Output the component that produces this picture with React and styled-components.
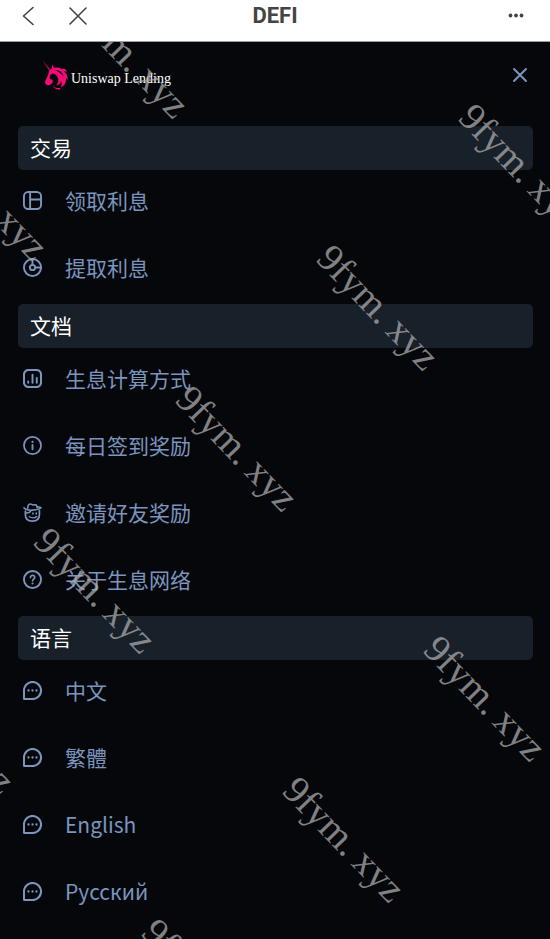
import React from 'react';
import styled, { createGlobalStyle } from 'styled-components';

const GlobalStyle = createGlobalStyle`
    * {
        box-sizing: border-box;
    }

    body {
        margin: 0;
        background: #05070b;
        font-family: "Noto Sans CJK SC", "Noto Sans", sans-serif;
    }
`;

const Page = styled.div`
    display: flex;
    flex-direction: column;
    min-height: 100vh;
    background: #05070b;
`;

const TitleBar = styled.header`
    display: grid;
    grid-template-columns: 1fr auto 1fr;
    align-items: center;
    height: 42px;
    padding: 0 24px 9px;
    background: #ffffff;
    border-bottom: 1px solid #a0a0a0;
`;

const TitleGroup = styled.div`
    display: flex;
    align-items: center;
    justify-content: ${props => props.$end ? 'flex-end' : 'flex-start'};
    gap: 24px;
`;

const Title = styled.h1`
    margin: 0;
    font-family: Roboto, sans-serif;
    font-size: 22px;
    font-weight: 700;
    line-height: 32px;
    color: #444444;
`;

const IconButton = styled.button`
    display: flex;
    padding: 0;
    border: 0;
    background: none;
    color: ${props => props.$color || '#444444'};
    cursor: pointer;
`;

const Menu = styled.main`
    position: relative;
    flex: 1;
    padding: 0 17px 0 18px;
    overflow: hidden;
`;

const Brand = styled.div`
    display: flex;
    align-items: flex-start;
    justify-content: space-between;
    height: 84px;
    padding: 18px 4px 0 24px;
`;

const Logo = styled.a`
    display: flex;
    align-items: flex-end;
    gap: 2px;
    color: #ffffff;
    font-family: "Liberation Serif", serif;
    font-size: 14px;
    line-height: 22px;
    text-decoration: none;
`;

const CloseWrap = styled.div`
    padding-top: 6px;
`;

const SectionTitle = styled.h2`
    margin: 0;
    padding: 0 12px 2px;
    border-radius: 5px;
    background: #18202a;
    color: #ffffff;
    font-size: 21px;
    font-weight: 400;
    line-height: 42px;
`;

const List = styled.ul`
    margin: 0;
    padding: 0;
    list-style: none;
`;

const Item = styled.li`
    height: 67px;
`;

const ItemLink = styled.a`
    display: flex;
    align-items: center;
    gap: 23px;
    height: 60px;
    padding-left: 5px;
    color: #7b95bf;
    font-size: 21px;
    line-height: 30px;
    text-decoration: none;
`;

const Icon = styled.svg`
    flex: none;
    width: ${props => props.$size || 19}px;
    height: ${props => props.$size || 19}px;
    fill: none;
    stroke: currentColor;
    stroke-width: 2;
    stroke-linecap: round;
    stroke-linejoin: round;
`;

const Mark = styled.span`
    position: absolute;
    left: ${props => props.$x}px;
    top: ${props => props.$y}px;
    transform: rotate(46deg);
    transform-origin: 0 50%;
    color: rgba(170, 170, 170, 0.75);
    font-family: "Liberation Serif", serif;
    font-size: 39px;
    line-height: 48px;
    white-space: nowrap;
    pointer-events: none;

    span {
        margin-left: 8px;
    }
`;

const icons = {
    layout: (
        <>
            <rect x="1" y="1" width="18" height="18" rx="4.5" />
            <path d="M7.5 1v18M7.5 9H19" />
        </>
    ),
    donut: (
        <>
            <circle cx="10" cy="10" r="9" />
            <circle cx="10" cy="10" r="2.8" />
            <path d="M10 1v6M13 10h6" />
        </>
    ),
    chart: (
        <>
            <rect x="1" y="1" width="18" height="18" rx="5" strokeWidth="2.2" />
            <path d="M5.5 13v1.5M10 6v8.5M14.5 9.5v5" />
        </>
    ),
    info: (
        <>
            <circle cx="10" cy="10" r="9" strokeWidth="1.8" />
            <path d="M10 9.5V14" />
            <circle cx="10" cy="6.2" r="1.2" fill="currentColor" stroke="none" />
        </>
    ),
    friend: (
        <>
            <path d="M1 5c1.800 2.200 5 2.800 9 2.500 4-.2 7.200-1 9-2.500-1.500-.7-2.800-1-4.200-1" strokeWidth="1.6" />
            <path d="M5 5.500C5 3 5.500 1 7.500 1c1.500 0 2 1 3.500 1 1.300 0 3-.6 3.500.8L15 5" strokeWidth="1.6" />
            <path d="M2.500 8.500V12c0 4.500 3 7 7.300 7 4.400 0 7.500-2.500 7.500-7V8" strokeWidth="1.8" />
            <path d="M3 10.500c2.500.2 4.500-.6 5.500-2.500" strokeWidth="1.4" />
            <path d="M10.500 10.500v1M14 10.500v1" strokeWidth="1.6" />
            <path d="M6.500 14.500c2.500 1.300 6 1.200 8-.2" strokeWidth="1.4" />
        </>
    ),
    help: (
        <>
            <circle cx="10" cy="10" r="9" />
            <path d="M7.800 8c0-1.500 1-2.300 2.200-2.300s2.300.8 2.300 2.100c0 1.700-2.300 1.800-2.300 3.700" strokeWidth="1.7" />
            <circle cx="10" cy="14.2" r="1.1" fill="currentColor" stroke="none" />
        </>
    ),
    chat: (
        <>
            <path d="M1 10a9 9 0 1 1 9 9H2Q1 19 1 18Z" strokeWidth="2.2" />
            <g fill="currentColor" stroke="none">
                <circle cx="5.8" cy="10" r="1.2" />
                <circle cx="10" cy="10" r="1.2" />
                <circle cx="14.2" cy="10" r="1.2" />
            </g>
        </>
    )
};

const sections = [
    {
        title: '交易',
        items: [
            { icon: 'layout', label: '领取利息' },
            { icon: 'donut', label: '提取利息' }
        ]
    },
    {
        title: '文档',
        items: [
            { icon: 'chart', label: '生息计算方式' },
            { icon: 'info', label: '每日签到奖励' },
            { icon: 'friend', label: '邀请好友奖励' },
            { icon: 'help', label: '关于生息网络' }
        ]
    },
    {
        title: '语言',
        items: [
            { icon: 'chat', label: '中文' },
            { icon: 'chat', label: '繁體' },
            { icon: 'chat', label: 'English' },
            { icon: 'chat', label: 'Русский' }
        ]
    }
];

const marks = [
    [74, -67], [466, 44], [-67, 75], [324, 185], [183, 326],
    [41, 468], [431, 576], [-100, 609], [290, 717], [149, 859]
];

const Unicorn = () => (
    <svg width="27" height="30" viewBox="0 0 27 30" fill="#f50a78" aria-hidden="true">
        <path d="M.5.5 9 9.500 7.500 11.500Z" opacity="0.6" />
        <path d="M10 4.500 12.500 8l-2.700 1Z" />
        <path d="M8.500 9.500c3-2.200 7.500-2.700 11-.5 3.500-.8 5.500 1 5 3-.8-.8-1.700-1-2.700-.8 2.700 2.200 4.200 5 3.800 9.300-.6-1.400-1-2-1.700-2.500.5 4.500-1.200 7.500-4.700 9.500.8-2.500.8-4.500 0-6.500-.8 2.700-2.500 4-5 4.300 2.200-2.500 2.700-4.800 1.700-7.300-.8-2.500-2.700-4-5.200-4.500-1.500.3-2.500 1.500-3 3.500-.3 1.500.5 2.200 2 2.500 1.200.5 1.500 1.700.8 3-1 1.800-2.700 3-4.700 2.800-2-.2-3-1.800-2.700-4l1.200-2.500 2-4.300c.2-2.300.7-4 2.200-5Z" />
        <path d="M10.500 24.500c.8 2.500 3.500 4.500 8 3.200l-1 2c-3.500-.2-6.200-1.700-7-5.200Z" />
        <path d="M13 10c4.500.2 7.500 2.500 8.700 6.500-2.200-3-4.800-4.500-8.700-6.500Z" fill="#05070b" />
    </svg>
);

const App = () => {
    return (
        <Page>
            <GlobalStyle />
            <TitleBar>
                <TitleGroup>
                    <IconButton aria-label="Back">
                        <Icon $size={20} viewBox="0 0 20 20" overflow="visible">
                            <path d="M9 1.500 -.500 10 9 18.500" strokeWidth="1.6" />
                        </Icon>
                    </IconButton>
                    <IconButton aria-label="Close page">
                        <Icon $size={20} viewBox="0 0 20 20">
                            <path d="m2 2 16 16M18 2 2 18" strokeWidth="1.6" />
                        </Icon>
                    </IconButton>
                </TitleGroup>
                <Title>DEFI</Title>
                <TitleGroup $end>
                    <IconButton aria-label="More">
                        <Icon $size={20} viewBox="0 0 20 20">
                            <g fill="currentColor" stroke="none">
                                <circle cx="4.5" cy="9.5" r="1.9" />
                                <circle cx="10" cy="9.5" r="1.9" />
                                <circle cx="15.5" cy="9.5" r="1.9" />
                            </g>
                        </Icon>
                    </IconButton>
                </TitleGroup>
            </TitleBar>
            <Menu>
                <Brand>
                    <Logo href="#">
                        <Unicorn />
                        <span>Uniswap Lending</span>
                    </Logo>
                    <CloseWrap>
                        <IconButton aria-label="Close menu" $color="#7b95bf">
                            <Icon $size={20} viewBox="0 0 20 20">
                                <path d="m5 3 12 12M17 3 5 15" />
                            </Icon>
                        </IconButton>
                    </CloseWrap>
                </Brand>
                <nav>
                    {sections.map(section => (
                        <section key={section.title}>
                            <SectionTitle>{section.title}</SectionTitle>
                            <List>
                                {section.items.map(item => (
                                    <Item key={item.label}>
                                        <ItemLink href="#">
                                            <Icon viewBox="0 0 20 20">{icons[item.icon]}</Icon>
                                            {item.label}
                                        </ItemLink>
                                    </Item>
                                ))}
                            </List>
                        </section>
                    ))}
                </nav>
                {marks.map(([x, y]) => (
                    <Mark key={`${x},${y}`} $x={x} $y={y} aria-hidden="true">9fym.<span>xyz</span></Mark>
                ))}
            </Menu>
        </Page>
    );
}

export default App;
